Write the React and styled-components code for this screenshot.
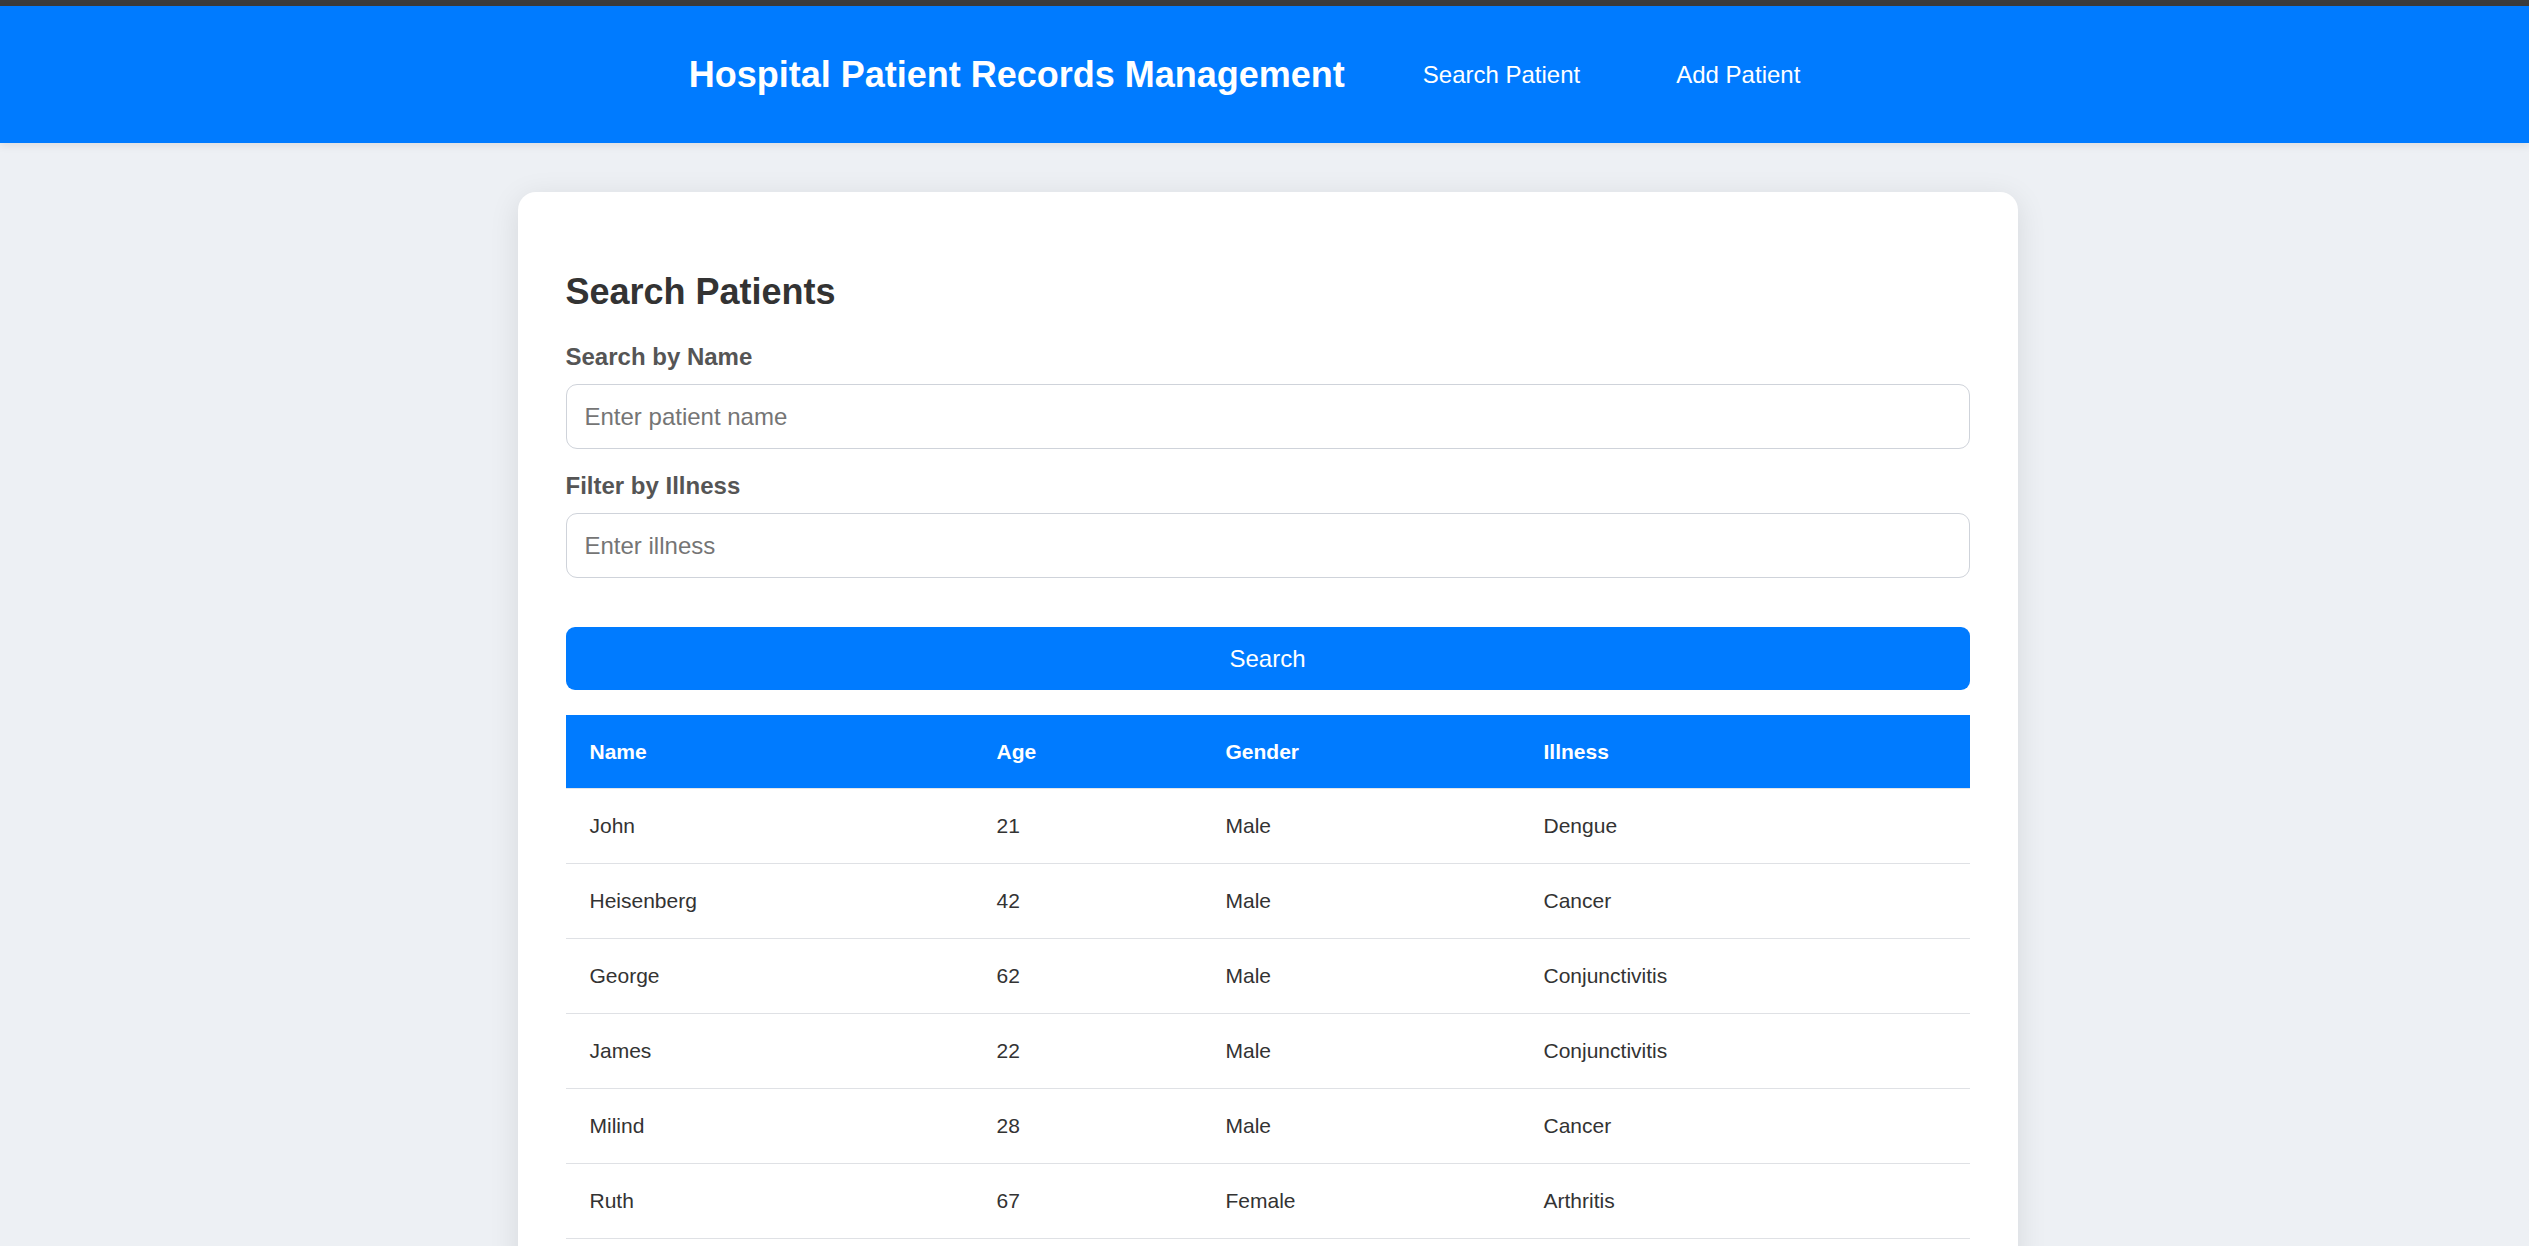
import React from "react";
import styled, { createGlobalStyle } from "styled-components";

const GlobalStyle = createGlobalStyle`
  html, body {
    margin: 0;
    padding: 0;
  }
  body {
    background: #edf0f4;
    font-family: "Liberation Sans", Arial, sans-serif;
    color: #333;
  }
`;

const patients = [
  { name: "John", age: 21, gender: "Male", illness: "Dengue" },
  { name: "Heisenberg", age: 42, gender: "Male", illness: "Cancer" },
  { name: "George", age: 62, gender: "Male", illness: "Conjunctivitis" },
  { name: "James", age: 22, gender: "Male", illness: "Conjunctivitis" },
  { name: "Milind", age: 28, gender: "Male", illness: "Cancer" },
  { name: "Ruth", age: 67, gender: "Female", illness: "Arthritis" },
];

const TopStrip = styled.div`
  height: 6px;
  background: #3b3b3b;
`;

const Header = styled.header`
  height: 137px;
  padding-left: 8px;
  background: #007bff;
  display: flex;
  align-items: center;
  justify-content: center;
  box-shadow: 0 3px 8px rgba(0, 0, 0, 0.08);
`;

const Title = styled.h1`
  margin: 0 30px 0 0;
  font-size: 36px;
  font-weight: 700;
  color: #fff;
`;

const Nav = styled.nav`
  display: flex;
  align-items: center;
`;

const NavLink = styled.a`
  margin: 0 48px;
  font-size: 24px;
  color: #fff;
  text-decoration: none;
  cursor: pointer;
`;

const Main = styled.main`
  padding: 49px 0 0 6px;
`;

const Card = styled.section`
  width: 1500px;
  box-sizing: border-box;
  margin: 0 auto;
  padding: 48px 48px 36px;
  background: #fff;
  border-radius: 18px;
  box-shadow: 0 6px 30px rgba(0, 0, 0, 0.1);
`;

const Heading = styled.h2`
  margin: 31px 0 30px;
  font-size: 36px;
  font-weight: 700;
  color: #333;
`;

const Field = styled.div`
  display: flex;
  flex-direction: column;
  margin-bottom: ${(p) => p.$mb ?? 23}px;
`;

const Label = styled.label`
  font-size: 24px;
  font-weight: 700;
  color: #555;
  margin-bottom: 13px;
`;

const Input = styled.input`
  height: 65px;
  box-sizing: border-box;
  padding: 0 18px;
  font-family: inherit;
  font-size: 24px;
  color: #333;
  border: 1.5px solid #cfd3da;
  border-radius: 11px;
  outline: none;

  &::placeholder {
    color: #757575;
  }
`;

const Button = styled.button`
  display: block;
  width: 100%;
  height: 63px;
  margin-top: 49px;
  border: none;
  border-radius: 9px;
  background: #007bff;
  color: #fff;
  font-family: inherit;
  font-size: 24px;
  cursor: pointer;
`;

const Table = styled.table`
  width: 100%;
  margin-top: 25px;
  border-collapse: collapse;
  table-layout: fixed;
`;

const Th = styled.th`
  width: ${(p) => (p.$w ? `${p.$w}px` : "auto")};
  padding: 24px;
  line-height: 25px;
  text-align: left;
  font-size: 21px;
  font-weight: 700;
  color: #fff;
  background: #007bff;
  border-bottom: 1.5px solid #e3e5e9;
`;

const Td = styled.td`
  padding: 24px;
  line-height: 26px;
  font-size: 21px;
  color: #333;
  border-bottom: 1.5px solid #dfe1e5;
`;

export default function App() {
  return (
    <>
      <GlobalStyle />
      <TopStrip />
      <Header>
        <Title>Hospital Patient Records Management</Title>
        <Nav>
          <NavLink>Search Patient</NavLink>
          <NavLink>Add Patient</NavLink>
        </Nav>
      </Header>
      <Main>
        <Card>
          <Heading>Search Patients</Heading>
          <Field>
            <Label>Search by Name</Label>
            <Input placeholder="Enter patient name" />
          </Field>
          <Field $mb={0}>
            <Label>Filter by Illness</Label>
            <Input placeholder="Enter illness" />
          </Field>
          <Button>Search</Button>
          <Table>
            <thead>
              <tr>
                <Th $w={359}>Name</Th>
                <Th $w={181}>Age</Th>
                <Th $w={270}>Gender</Th>
                <Th>Illness</Th>
              </tr>
            </thead>
            <tbody>
              {patients.map((p) => (
                <tr key={p.name}>
                  <Td>{p.name}</Td>
                  <Td>{p.age}</Td>
                  <Td>{p.gender}</Td>
                  <Td>{p.illness}</Td>
                </tr>
              ))}
            </tbody>
          </Table>
        </Card>
      </Main>
    </>
  );
}
